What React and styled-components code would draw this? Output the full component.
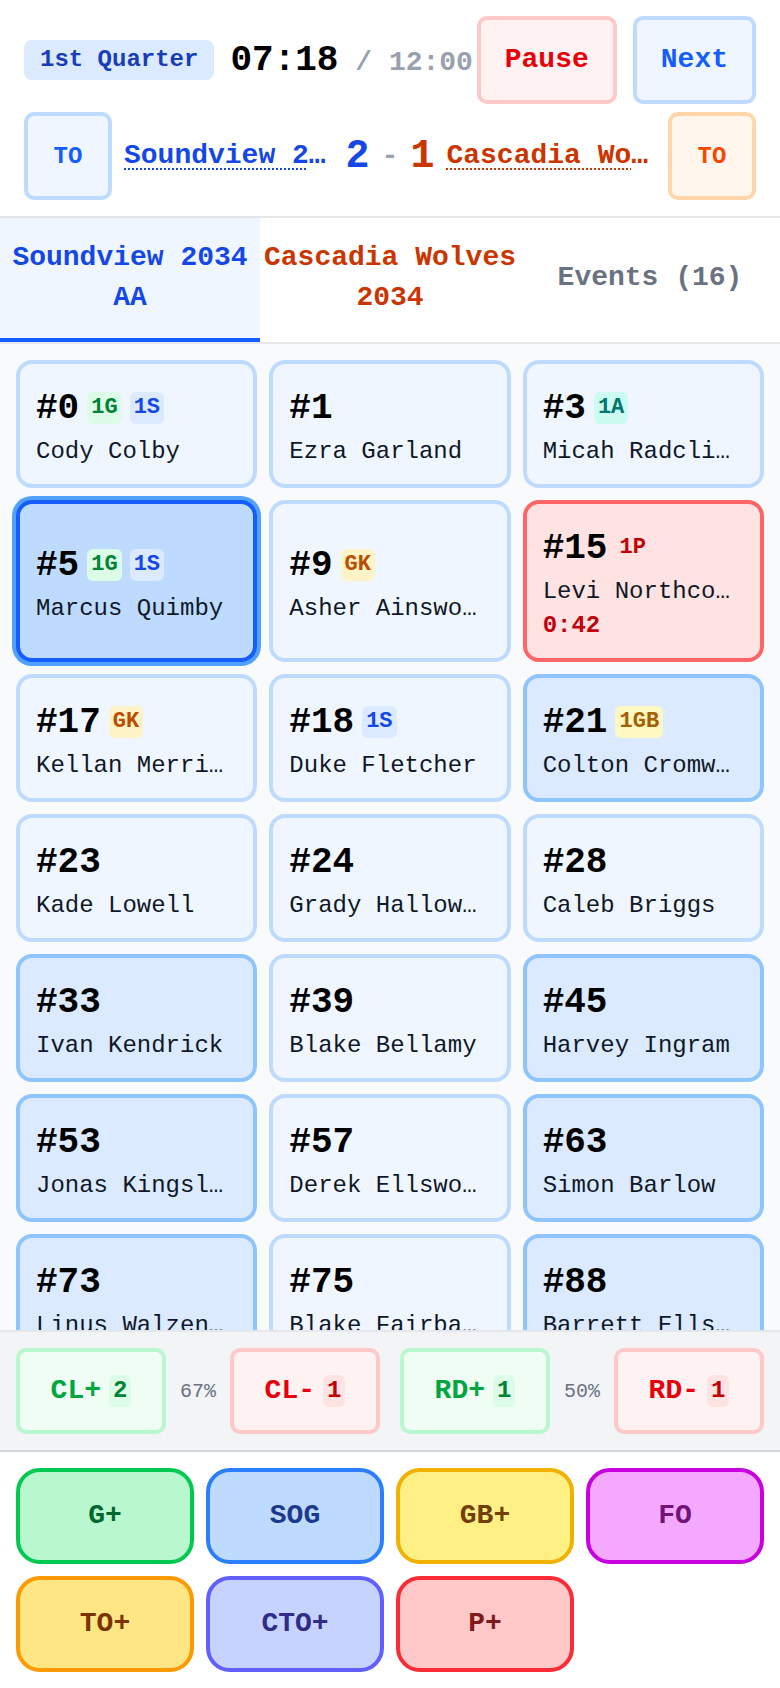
import { createGlobalStyle, styled, css } from "styled-components";

const GlobalStyle = createGlobalStyle`
  *, *::before, *::after { box-sizing: border-box; }
  html, body { margin: 0; padding: 0; }
  body {
    font-family: "Liberation Mono", "DejaVu Sans Mono", monospace;
    color: #101828;
    background: #ffffff;
  }
  button { font-family: inherit; cursor: pointer; }
`;

const Screen = styled.div`
  height: 100vh;
  display: flex;
  flex-direction: column;
  overflow: hidden;
`;

/* ---------- header: clock + scoreline ---------- */

const Header = styled.header`
  display: flex;
  flex-direction: column;
  gap: 8px;
  padding: 16px 24px;
  border-bottom: 2px solid #e5e7eb;
`;

const ClockRow = styled.div`
  display: flex;
  align-items: center;
  gap: 16px;
`;

const Period = styled.span`
  flex: none;
  height: 40px;
  line-height: 40px;
  padding: 0 16px;
  border-radius: 8px;
  background: #dbeafe;
  color: #193cb8;
  font-size: 24px;
  font-weight: 700;
  white-space: nowrap;
`;

const Clock = styled.div`
  flex: 1 1 0;
  min-width: 0;
  white-space: nowrap;
  font-size: 36px;
  font-weight: 700;
  color: #000;
`;

const ClockLimit = styled.span`
  font-size: 28px;
  color: #99a1af;
`;

const Controls = styled.div`
  flex: none;
  display: flex;
  gap: 16px;
`;

const tones = {
  red: { bg: "#fef2f2", border: "#ffc9c9", fg: "#e7000b" },
  blue: { bg: "#eff6ff", border: "#bedbff", fg: "#155dfc" },
  orange: { bg: "#fff7ed", border: "#ffd6a7", fg: "#f54900" },
};

const ControlButton = styled.button`
  flex: none;
  padding: 20px 24px;
  line-height: 40px;
  font-size: 28px;
  font-weight: 700;
  border-radius: 10px;
  border: 4px solid ${(p) => tones[p.$tone].border};
  background: ${(p) => tones[p.$tone].bg};
  color: ${(p) => tones[p.$tone].fg};
`;

const ScoreRow = styled.div`
  display: flex;
  align-items: center;
  gap: 12px;
`;

const TimeoutButton = styled.button`
  flex: none;
  width: 88px;
  height: 88px;
  padding: 0;
  font-size: 24px;
  font-weight: 700;
  border-radius: 10px;
  border: 4px solid ${(p) => tones[p.$tone].border};
  background: ${(p) => tones[p.$tone].bg};
  color: ${(p) => tones[p.$tone].fg};
`;

const TeamName = styled.span`
  flex: 1;
  min-width: 0;
  overflow: hidden;
  text-overflow: ellipsis;
  white-space: nowrap;
  font-size: 28px;
  line-height: 44px;
  font-weight: 700;
  color: ${(p) => p.$color};
  text-decoration: underline dotted;
  text-decoration-thickness: 2px;
  text-underline-offset: 5px;
`;

const Score = styled.div`
  flex: none;
  display: flex;
  align-items: center;
  gap: 12px;
  font-weight: 700;
`;

const ScoreValue = styled.span`
  font-size: 40px;
  color: ${(p) => p.$color};
`;

const ScoreDash = styled.span`
  font-size: 28px;
  color: #99a1af;
`;

/* ---------- team tabs ---------- */

const Tabs = styled.nav`
  display: flex;
  border-bottom: 2px solid #e5e7eb;
`;

const Tab = styled.div`
  flex: 1;
  display: flex;
  align-items: center;
  justify-content: center;
  text-align: center;
  padding: 20px 2px;
  font-size: 28px;
  line-height: 40px;
  font-weight: 700;
  color: ${(p) => p.$color};
  border-bottom: 4px solid ${(p) => (p.$active ? "#155dfc" : "transparent")};
  background: ${(p) => (p.$active ? "#eff6ff" : "#fff")};
`;

/* ---------- roster grid ---------- */

const Roster = styled.main`
  flex: 1;
  min-height: 0;
  overflow-y: auto;
  scrollbar-width: none;
  background: #f9fafb;
  padding: 16px;
  &::-webkit-scrollbar { display: none; }
`;

const Grid = styled.div`
  display: grid;
  grid-template-columns: repeat(3, 1fr);
  gap: 12px;
`;

const cardLooks = {
  bench: css`
    background: #eff6ff;
    border-color: #bedbff;
  `,
  field: css`
    background: #dbeafe;
    border-color: #8ec5ff;
  `,
  selected: css`
    background: #bedbff;
    border-color: #155dfc;
    box-shadow: 0 0 0 4px #51a2ff;
  `,
  penalty: css`
    background: #ffe2e2;
    border-color: #ff6467;
  `,
};

const Card = styled.div`
  min-width: 0;
  display: flex;
  flex-direction: column;
  justify-content: center;
  padding: 16px;
  border: 4px solid;
  border-radius: 16px;
  ${(p) => cardLooks[p.$look]}
`;

const CardTop = styled.div`
  display: flex;
  align-items: center;
  gap: 8px;
  height: 56px;
`;

const Number = styled.span`
  font-size: 36px;
  font-weight: 700;
  color: #000;
`;

const badgeTones = {
  G: { bg: "#dcfce7", fg: "#008236" },
  S: { bg: "#dbeafe", fg: "#1447e6" },
  A: { bg: "#cbfbf1", fg: "#00786f" },
  GK: { bg: "#fef3c6", fg: "#bb4d00" },
  GB: { bg: "#fef9c2", fg: "#a65f00" },
  P: { bg: "#ffe2e2", fg: "#c10007" },
};

const Badge = styled.span`
  padding: 0 4px;
  line-height: 32px;
  border-radius: 6px;
  font-size: 22px;
  font-weight: 700;
  background: ${(p) => badgeTones[p.$kind].bg};
  color: ${(p) => badgeTones[p.$kind].fg};
`;

const PlayerName = styled.div`
  font-size: 24px;
  line-height: 32px;
  color: #101828;
  overflow: hidden;
  text-overflow: ellipsis;
  white-space: nowrap;
`;

const PenaltyClock = styled.div`
  margin-top: 2px;
  font-size: 24px;
  line-height: 32px;
  font-weight: 700;
  color: #c10007;
`;

/* ---------- clear / ride counters ---------- */

const StatBar = styled.section`
  display: flex;
  gap: 20px;
  padding: 16px;
  background: #f3f4f6;
  border-top: 2px solid #e5e7eb;
  border-bottom: 2px solid #d1d5dc;
`;

const StatGroup = styled.div`
  flex: 1;
  display: flex;
  align-items: center;
  gap: 14px;
`;

const statTones = {
  good: { bg: "#f0fdf4", border: "#b9f8cf", fg: "#00a63e", chipBg: "#dcfce7", chipFg: "#008236" },
  bad: { bg: "#fef2f2", border: "#ffc9c9", fg: "#e7000b", chipBg: "#ffe2e2", chipFg: "#c10007" },
};

const StatButton = styled.button`
  flex: 1;
  display: flex;
  align-items: center;
  justify-content: center;
  gap: 8px;
  padding: 19px 0;
  line-height: 40px;
  font-size: 28px;
  font-weight: 700;
  border-radius: 10px;
  border: 4px solid ${(p) => statTones[p.$tone].border};
  background: ${(p) => statTones[p.$tone].bg};
  color: ${(p) => statTones[p.$tone].fg};
`;

const StatCount = styled.span`
  padding: 0 4px;
  line-height: 32px;
  border-radius: 6px;
  font-size: 24px;
  background: ${(p) => statTones[p.$tone].chipBg};
  color: ${(p) => statTones[p.$tone].chipFg};
`;

const Percent = styled.span`
  font-size: 20px;
  color: #6a7282;
`;

/* ---------- event buttons ---------- */

const ActionPad = styled.section`
  display: grid;
  grid-template-columns: repeat(4, 1fr);
  gap: 12px;
  padding: 16px;
  background: #fff;
`;

const actionTones = {
  goal: { bg: "#b9f8cf", border: "#00c950", fg: "#016630" },
  shot: { bg: "#bedbff", border: "#2b7fff", fg: "#1c398e" },
  ground: { bg: "#fff085", border: "#f0b100", fg: "#733e0a" },
  faceoff: { bg: "#f4a8ff", border: "#c800de", fg: "#721378" },
  turnover: { bg: "#fee685", border: "#fe9a00", fg: "#7b3306" },
  caused: { bg: "#c6d2ff", border: "#615fff", fg: "#312c85" },
  penalty: { bg: "#ffc9c9", border: "#fb2c36", fg: "#82181a" },
};

const ActionButton = styled.button`
  padding: 24px 0;
  line-height: 40px;
  font-size: 28px;
  font-weight: 700;
  border-radius: 24px;
  border: 4px solid ${(p) => actionTones[p.$tone].border};
  background: ${(p) => actionTones[p.$tone].bg};
  color: ${(p) => actionTones[p.$tone].fg};
`;

const players = [
  { no: 0, name: "Cody Colby", look: "bench", badges: [["1G", "G"], ["1S", "S"]] },
  { no: 1, name: "Ezra Garland", look: "bench" },
  { no: 3, name: "Micah Radcliffe", look: "bench", badges: [["1A", "A"]] },
  { no: 5, name: "Marcus Quimby", look: "selected", badges: [["1G", "G"], ["1S", "S"]] },
  { no: 9, name: "Asher Ainsworth", look: "bench", badges: [["GK", "GK"]] },
  { no: 15, name: "Levi Northcott", look: "penalty", badges: [["1P", "P"]], penalty: "0:42" },
  { no: 17, name: "Kellan Merriweather", look: "bench", badges: [["GK", "GK"]] },
  { no: 18, name: "Duke Fletcher", look: "bench", badges: [["1S", "S"]] },
  { no: 21, name: "Colton Cromwell", look: "field", badges: [["1GB", "GB"]] },
  { no: 23, name: "Kade Lowell", look: "bench" },
  { no: 24, name: "Grady Halloway", look: "bench" },
  { no: 28, name: "Caleb Briggs", look: "bench" },
  { no: 33, name: "Ivan Kendrick", look: "field" },
  { no: 39, name: "Blake Bellamy", look: "bench" },
  { no: 45, name: "Harvey Ingram", look: "field" },
  { no: 53, name: "Jonas Kingsley", look: "field" },
  { no: 57, name: "Derek Ellsworth", look: "bench" },
  { no: 63, name: "Simon Barlow", look: "field" },
  { no: 73, name: "Linus Walzenbach", look: "field" },
  { no: 75, name: "Blake Fairbanks", look: "bench" },
  { no: 88, name: "Barrett Ellsworth", look: "field" },
];

const actions = [
  ["G+", "goal"],
  ["SOG", "shot"],
  ["GB+", "ground"],
  ["FO", "faceoff"],
  ["TO+", "turnover"],
  ["CTO+", "caused"],
  ["P+", "penalty"],
];

function PlayerCard({ player }) {
  return (
    <Card $look={player.look}>
      <CardTop>
        <Number>#{player.no}</Number>
        {(player.badges || []).map(([label, kind]) => (
          <Badge key={label} $kind={kind}>
            {label}
          </Badge>
        ))}
      </CardTop>
      <PlayerName>{player.name}</PlayerName>
      {player.penalty && <PenaltyClock>{player.penalty}</PenaltyClock>}
    </Card>
  );
}

function StatPair({ plus, minus, percent }) {
  return (
    <StatGroup>
      <StatButton $tone="good">
        {plus[0]}
        <StatCount $tone="good">{plus[1]}</StatCount>
      </StatButton>
      <Percent>{percent}</Percent>
      <StatButton $tone="bad">
        {minus[0]}
        <StatCount $tone="bad">{minus[1]}</StatCount>
      </StatButton>
    </StatGroup>
  );
}

export default function App() {
  return (
    <Screen>
      <GlobalStyle />
      <Header>
        <ClockRow>
          <Period>1st Quarter</Period>
          <Clock>
            07:18<ClockLimit> / 12:00</ClockLimit>
          </Clock>
          <Controls>
            <ControlButton $tone="red">Pause</ControlButton>
            <ControlButton $tone="blue">Next</ControlButton>
          </Controls>
        </ClockRow>
        <ScoreRow>
          <TimeoutButton $tone="blue">TO</TimeoutButton>
          <TeamName $color="#1447e6">Soundview 2034 AA</TeamName>
          <Score>
            <ScoreValue $color="#1447e6">2</ScoreValue>
            <ScoreDash>-</ScoreDash>
            <ScoreValue $color="#ca3500">1</ScoreValue>
          </Score>
          <TeamName $color="#ca3500">Cascadia Wolves 2034</TeamName>
          <TimeoutButton $tone="orange">TO</TimeoutButton>
        </ScoreRow>
      </Header>

      <Tabs>
        <Tab $active $color="#1447e6">Soundview 2034 AA</Tab>
        <Tab $color="#ca3500">Cascadia Wolves 2034</Tab>
        <Tab $color="#6a7282">Events (16)</Tab>
      </Tabs>

      <Roster>
        <Grid>
          {players.map((p) => (
            <PlayerCard key={p.no} player={p} />
          ))}
        </Grid>
      </Roster>

      <StatBar>
        <StatPair plus={["CL+", 2]} minus={["CL-", 1]} percent="67%" />
        <StatPair plus={["RD+", 1]} minus={["RD-", 1]} percent="50%" />
      </StatBar>

      <ActionPad>
        {actions.map(([label, tone]) => (
          <ActionButton key={label} $tone={tone}>
            {label}
          </ActionButton>
        ))}
      </ActionPad>
    </Screen>
  );
}
